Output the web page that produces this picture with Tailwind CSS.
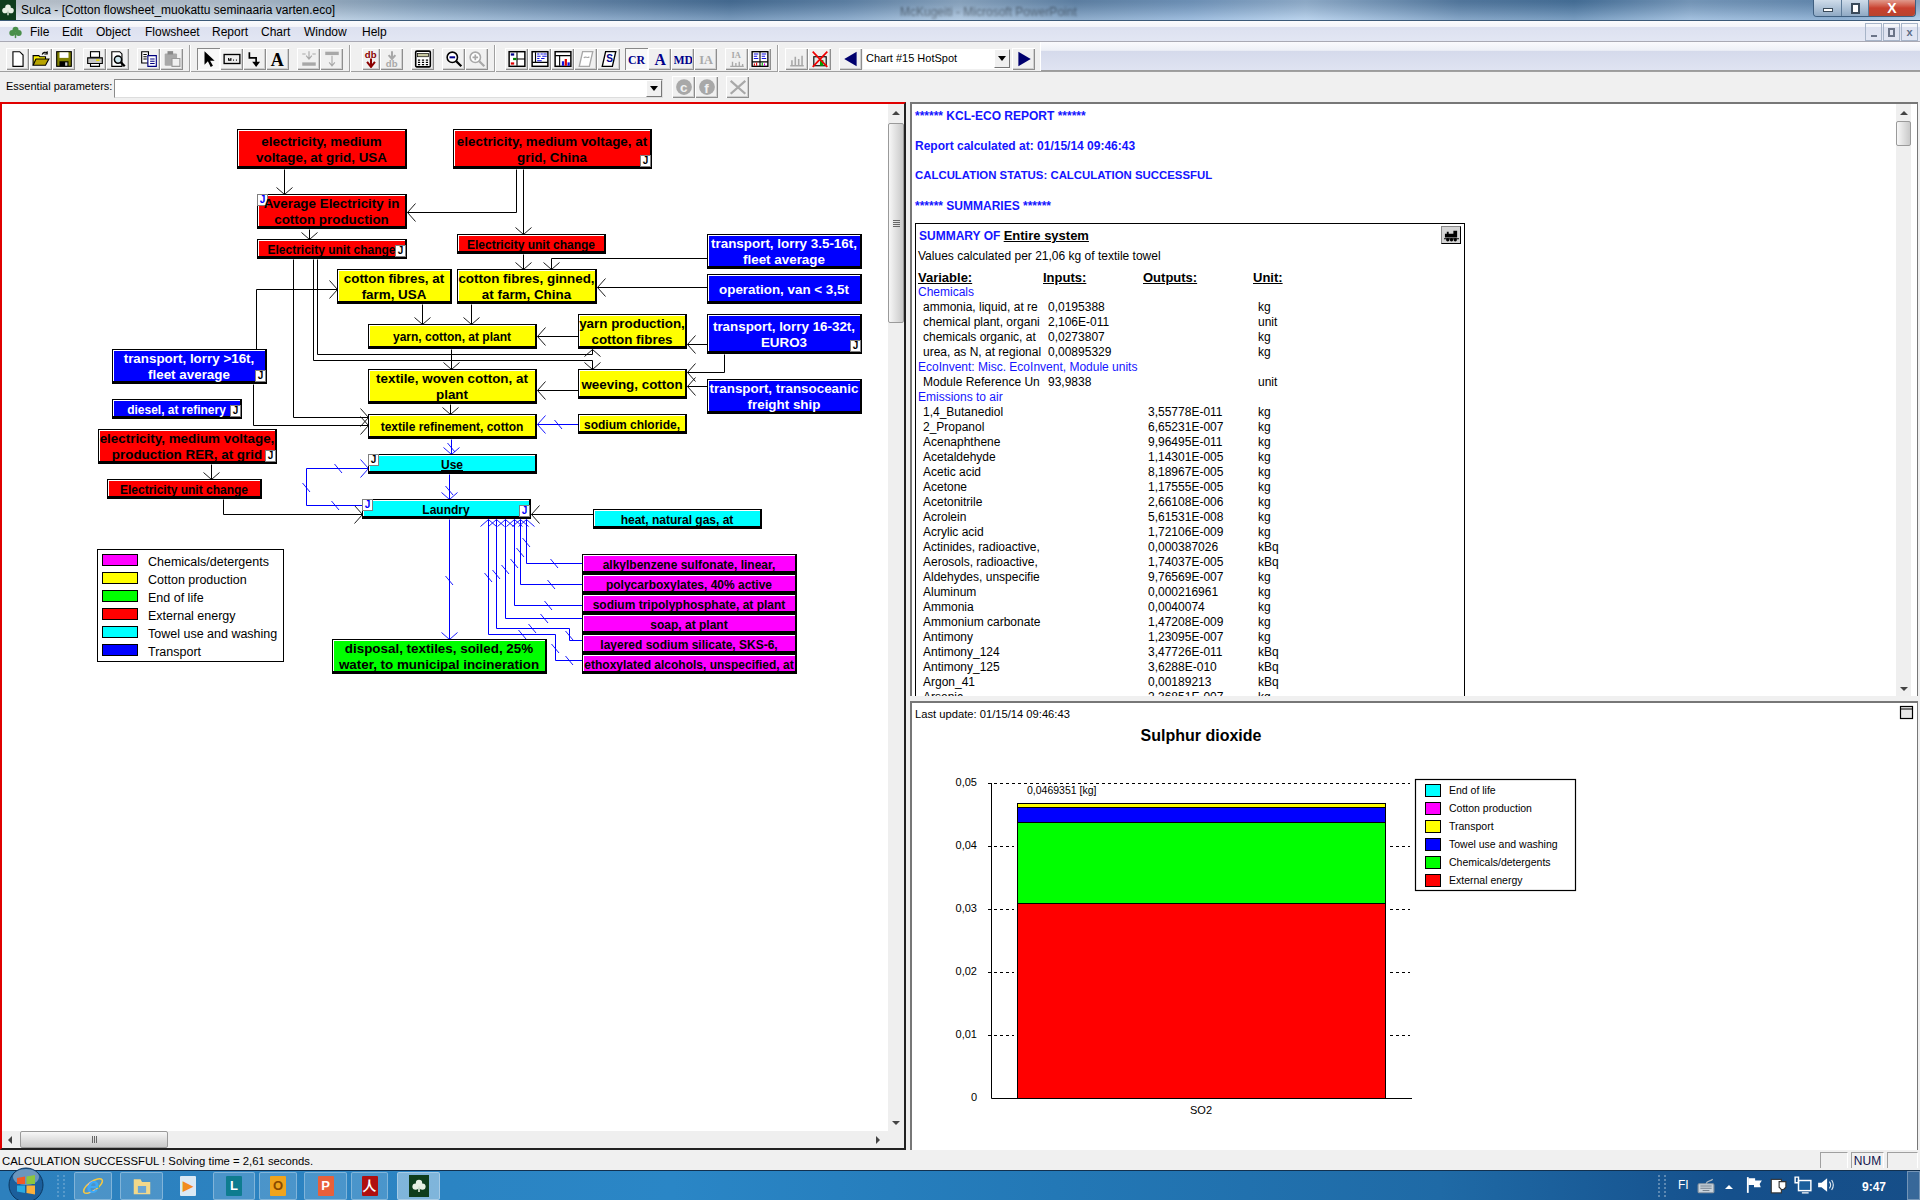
<!DOCTYPE html>
<html lang="en">
<head>
  <meta charset="UTF-8" />
  <title>Sulca</title>
  <script src="https://cdn.jsdelivr.net/npm/@tailwindcss/browser@4"></script>
</head>
<body class="w-[1920px] h-[1200px] overflow-hidden flex flex-col bg-[#f0f0f0] text-black font-['Liberation_Sans',Arial,sans-serif]">

  <!-- Title bar -->
  <header class="relative h-[21px] shrink-0 flex items-center overflow-hidden border-b border-[#3c5a78] bg-[linear-gradient(90deg,#d5dfea_0%,#c6d6e6_12%,#8fb0d0_22%,#6f95bd_30%,#4f7ba8_38%,#6a93bd_44%,#9dbcdb_50%,#6c94bd_56%,#7fa8d4_62%,#a5c6e8_68%,#5f8ab6_76%,#4f7fae_82%,#87aed6_88%,#6e9ac7_96%,#9cc0e4_100%)]">
    <div class="absolute inset-0 bg-gradient-to-b from-black/15 to-white/25"></div>
    <div class="relative w-[16px] h-[20px] bg-[#0e3d1c] flex items-center justify-center" id="titleIcon"></div>
    <span class="relative ml-[5px] text-[12px] text-black">Sulca - [Cotton flowsheet_muokattu seminaaria varten.eco]</span>
    <span class="absolute left-[900px] top-[3px] text-[12px] text-black/40 blur-[1px]">McKugeiti - Microsoft PowerPoint</span>
    <div class="absolute right-[4px] top-0 h-[17px] flex rounded-b-[4px] border border-t-0 border-[#3f5f80] overflow-hidden">
      <div class="w-[28px] bg-gradient-to-b from-[#cfdcea] to-[#8fa9c4] flex items-center justify-center border-r border-[#5c7a98]"><div class="w-[10px] h-[4px] bg-white border border-[#3a4a5a] mt-[4px]"></div></div>
      <div class="w-[27px] bg-gradient-to-b from-[#cfdcea] to-[#8fa9c4] flex items-center justify-center border-r border-[#5c7a98]"><div class="w-[9px] h-[11px] bg-white border-2 border-[#3a4a5a]"></div></div>
      <div class="w-[46px] bg-gradient-to-b from-[#e0998c] via-[#c9402f] to-[#b8442f] flex items-center justify-center text-white text-[14px] font-bold leading-none">X</div>
    </div>
  </header>

  <!-- Menu bar -->
  <nav class="relative h-[21px] shrink-0 flex items-center pt-[2px] text-[12px] border-b border-[#a9a9b4] bg-[linear-gradient(#fbfbfd_0%,#f3f4f9_30%,#dde1f0_32%,#e2e6f3_100%)]">
    <div class="w-[30px] flex justify-center" id="menuIcon"></div>
    <span class="w-[32px]">File</span>
    <span class="w-[34px]">Edit</span>
    <span class="w-[49px]">Object</span>
    <span class="w-[67px]">Flowsheet</span>
    <span class="w-[49px]">Report</span>
    <span class="w-[43px]">Chart</span>
    <span class="w-[58px]">Window</span>
    <span>Help</span>
    <div class="absolute right-[2px] top-[2px] flex gap-[1px] text-[#5d6b85]">
      <div class="w-[17px] h-[18px] border border-[#a7b4c8] flex items-end justify-center pb-[3px]"><div class="w-[6px] h-[2px] bg-[#6b7488]"></div></div>
      <div class="w-[17px] h-[18px] border border-[#a7b4c8] flex items-center justify-center"><div class="w-[7px] h-[9px] border-2 border-[#6b7488]"></div></div>
      <div class="w-[17px] h-[18px] border border-[#a7b4c8] flex items-center justify-center text-[11px] font-bold leading-none">x</div>
    </div>
  </nav>

  <!-- Toolbar -->
  <div class="h-[30px] shrink-0 flex border-b border-[#a0a0a0]">
    <div id="toolbar" class="w-[1041px] shrink-0 flex items-center pt-[4px] bg-[#f0f0f0] border-r border-[#fff]"></div>
    <div class="flex-1 border-b border-[#9c9c9c] bg-[linear-gradient(#fafafd_0%,#eef0f7_30%,#d5daeb_32%,#dfe3f2_100%)]"></div>
  </div>

  <!-- Essential parameters -->
  <div class="h-[30px] shrink-0 flex items-center bg-[#f0f0f0]">
    <span class="ml-[6px] w-[108px] text-[11px] pb-[2px] whitespace-nowrap">Essential parameters:</span>
    <div class="w-[549px] h-[19px] mt-[2px] bg-white border border-[#8a8a8a] border-b-[#ddd] border-r-[#ddd] flex justify-end items-stretch">
      <div class="w-[16px] bg-[#f0f0f0] border border-[#fff] border-r-[#777] border-b-[#777] flex items-center justify-center"><div class="w-0 h-0 border-x-[4px] border-x-transparent border-t-[5px] border-t-black"></div></div>
    </div>
    <div id="paramBtns" class="flex items-center ml-[9px]"></div>
  </div>

  <main class="h-[1048px] shrink-0 flex">
    <!-- Flowsheet -->
    <section class="w-[906px] shrink-0 flex flex-col border-l-2 border-t-2 border-t-[#e00000] border-l-[#e00000] border-r-2 border-r-[#222] border-b-2 border-b-[#222]">
      <div class="flex-1 flex min-h-0">
        <div class="relative flex-1 bg-white overflow-hidden">
          <div id="canvas" class="absolute left-[-2px] top-[-104px] w-[1000px] h-[1100px]"></div>
        </div>
        <div class="w-[16px] shrink-0 bg-[#efefef] flex flex-col items-center relative">
          <div class="mt-[7px] w-0 h-0 border-x-[4px] border-x-transparent border-b-[4px] border-b-[#444]"></div>
          <div class="absolute left-0 right-0 top-[19px] h-[200px] rounded-[2px] border border-[#9a9a9a] bg-gradient-to-r from-[#f7f7f7] to-[#c9c9c9] flex flex-col justify-center items-center gap-[1px]">
            <div class="w-[7px] h-px bg-[#666]"></div><div class="w-[7px] h-px bg-[#666]"></div><div class="w-[7px] h-px bg-[#666]"></div><div class="w-[7px] h-px bg-[#666]"></div>
          </div>
          <div class="absolute bottom-[6px] w-0 h-0 border-x-[4px] border-x-transparent border-t-[4px] border-t-[#444]"></div>
        </div>
      </div>
      <div class="relative h-[17px] shrink-0 bg-[#efefef] flex items-center">
        <div class="ml-[6px] w-0 h-0 border-y-[4px] border-y-transparent border-r-[4px] border-r-[#444]"></div>
        <div class="absolute left-[18px] top-0 bottom-0 w-[148px] rounded-[2px] border border-[#9a9a9a] bg-gradient-to-b from-[#f7f7f7] to-[#c9c9c9] flex justify-center items-center gap-[1px]">
          <div class="w-px h-[7px] bg-[#666]"></div><div class="w-px h-[7px] bg-[#666]"></div><div class="w-px h-[7px] bg-[#666]"></div>
        </div>
        <div class="absolute right-[24px] w-0 h-0 border-y-[4px] border-y-transparent border-l-[4px] border-l-[#444]"></div>
      </div>
    </section>

    <div class="w-[4px] shrink-0"></div>

    <!-- Report + chart -->
    <section class="flex-1 flex flex-col pr-[2px]">
      <div class="relative h-[594px] shrink-0 overflow-hidden bg-white border-l-2 border-t-2 border-[#777] border-r border-r-[#777]">
        <div class="pl-[3px] flex flex-col gap-[10px] pt-[2px] text-[12px] font-bold text-[#1414ff]">
          <div class="h-[20px] flex items-center">****** KCL-ECO REPORT ******</div>
          <div class="h-[20px] flex items-center">Report calculated at: 01/15/14 09:46:43</div>
          <div class="h-[20px] flex items-center text-[11.4px]">CALCULATION STATUS: CALCULATION SUCCESSFUL</div>
          <div class="h-[20px] flex items-center">****** SUMMARIES ******</div>
        </div>
        <div class="relative ml-[3px] mt-[7px] w-[550px] h-[600px] pt-[2px] border border-black text-[12px]">
          <div class="absolute right-[3px] top-[2px] w-[20px] h-[18px] bg-[#d4d4d4] border border-black border-t-[#888] border-l-[#888] flex items-center justify-center" id="trainBtn"></div>
          <div class="h-[20px] pl-[3px] flex items-center"><span class="font-bold text-[#1414ff]">SUMMARY OF&nbsp;</span><span class="font-bold underline text-[13px]">Entire system</span></div>
          <div class="h-[20px] pl-[2px] flex items-center">Values calculated per 21,06 kg of textile towel</div>
          <div class="h-[17px] mt-[2px] pl-[2px] grid grid-cols-[125px_100px_110px_100px] font-bold underline items-center text-[13px]">
            <span>Variable:</span><span>Inputs:</span><span>Outputs:</span><span>Unit:</span>
          </div>
          <div id="reportRows"></div>
        </div>
        <!-- report scrollbar -->
        <div class="absolute right-[6px] top-0 bottom-0 w-[15px] bg-[#efefef] flex flex-col items-center">
          <div class="mt-[7px] w-0 h-0 border-x-[4px] border-x-transparent border-b-[4px] border-b-[#444]"></div>
          <div class="absolute left-0 right-0 top-[17px] h-[25px] rounded-[2px] border border-[#9a9a9a] bg-gradient-to-r from-[#f7f7f7] to-[#c9c9c9]"></div>
          <div class="absolute bottom-[5px] w-0 h-0 border-x-[4px] border-x-transparent border-t-[4px] border-t-[#444]"></div>
        </div>
      </div>
      <div class="h-[5px] shrink-0"></div>
      <div class="relative flex-1 bg-white overflow-hidden border-l-2 border-t-2 border-[#777] border-r border-r-[#777]">
        <svg viewBox="912 703 1006 446" class="absolute left-0 top-0 w-[1006px] h-[446px]" id="chart"></svg>
      </div>
    </section>
  </main>

  <!-- Status bar -->
  <footer class="h-[20px] shrink-0 flex items-center text-[12px] bg-[#f0f0f0]">
    <span class="ml-[2px] flex-1 pt-[3px] text-[11.3px]">CALCULATION SUCCESSFUL ! Solving time = 2,61 seconds.</span>
    <div class="w-[28px] h-[16px] border border-[#a0a0a0] border-b-0 border-r-[#fff]"></div>
    <div class="ml-[3px] w-[33px] h-[16px] border border-[#a0a0a0] border-b-0 border-r-[#fff] text-[#10104a] text-[12px] leading-[16px] text-center">NUM</div>
    <div class="ml-[3px] mr-[2px] w-[31px] h-[16px] border border-[#a0a0a0] border-b-0 border-r-[#fff]"></div>
  </footer>

  <!-- Windows taskbar -->
  <div id="taskbar" class="relative h-[30px] shrink-0 flex items-center border-t border-[#12304e] bg-[linear-gradient(90deg,#2d80bd_0%,#2a86c6_35%,#2378b6_55%,#1f6aa6_75%,#15508c_90%,#164e88_100%)]"></div>

  <script>
    // --- little svg helpers ---
    const svg = (body, w = 18, h = 18) =>
      `<svg width="${w}" height="${h}" viewBox="0 0 16 16" class="block">${body}</svg>`;
    const clover = c => `<circle cx="8" cy="5" r="3.2" fill="${c}"/><circle cx="4.6" cy="8.6" r="3.2" fill="${c}"/><circle cx="11.4" cy="8.6" r="3.2" fill="${c}"/><path d="M7.2 8h1.6v6H7.2z" fill="${c}"/>`;

    document.getElementById("titleIcon").innerHTML = svg(clover("#e8f0e4"), 14, 14);
    document.getElementById("menuIcon").innerHTML = svg(clover("#4a8f4a"), 15, 15);
    document.getElementById("trainBtn").innerHTML = svg('<path d="M1 10V6h2V4h2v2h5V3h4v7zM0 11h16v1H0z" fill="#000"/><circle cx="4" cy="12.5" r="1.8" fill="#000"/><circle cx="8" cy="12.5" r="1.8" fill="#000"/><circle cx="12" cy="12.5" r="1.8" fill="#000"/>', 15, 15);

    const T = (t, x, y, size, fill, fam = "Liberation Serif") =>
      `<text x="${x}" y="${y}" font-size="${size}" font-weight="bold" font-family="${fam}" fill="${fill}">${t}</text>`;
    const gray = "#a8a8a8";
    const bars = c => `<path d="M2 14h12M3.5 14V9M6.5 14V6M9.5 14V8M12.5 14V5" stroke="${c}" stroke-width="1.4" fill="none"/>`;
    const frame = inner => `<rect x="1" y="1.5" width="14" height="13" fill="#fff" stroke="#000" stroke-width="1.3"/>${inner}`;
    const magnifier = (c, sign) => `<circle cx="6.5" cy="6.5" r="4.6" fill="#fff" stroke="${c}" stroke-width="1.4"/><path d="M10 10l4.5 4.5" stroke="${c}" stroke-width="2"/>${sign}`;

    const icons = {
      newDoc: '<path d="M3.5 1.5h6l3 3v10h-9z" fill="#fff" stroke="#000"/>',
      open: '<path d="M1 13.5V5h5l1 1h5v2" fill="#fff200" stroke="#000"/><path d="M1 13.5L3.5 8H15l-3 5.5z" fill="#b8a400" stroke="#000"/><path d="M9 4c1-2 3-2.5 4-1.5M13.5 1v2.5H11" fill="none" stroke="#000"/>',
      save: '<rect x="1.5" y="1.5" width="13" height="13" fill="#808000" stroke="#000"/><rect x="4" y="2" width="8" height="5" fill="#fff"/><rect x="4" y="10" width="8" height="4.5" fill="#000"/><rect x="9" y="11" width="2" height="3" fill="#ccc"/>',
      print: '<rect x="4" y="1.5" width="8" height="5" fill="#fff" stroke="#000"/><path d="M1.5 7h13v5h-13z" fill="#c8c8c8" stroke="#000"/><path d="M4 12h8v2.5H4z" fill="#fff" stroke="#000"/><path d="M9 9h3" stroke="#e8d800" stroke-width="1.5"/>',
      preview: '<path d="M2.5 1.5h7l2 2v11h-9z" fill="#fff" stroke="#000"/><circle cx="8" cy="8.5" r="3.2" fill="#cfe8f0" stroke="#000" stroke-width="1.3"/><path d="M10.5 11l3.5 3.5" stroke="#000" stroke-width="2"/>',
      copy: '<path d="M1.5 1.5h6v10h-6z" fill="#fff" stroke="#000"/><path d="M3 4h3M3 6h3M3 8h3" stroke="#000"/><path d="M7 5h7.5v9.5H7z" fill="#fff" stroke="#000080"/><path d="M9 8h4M9 10h4M9 12h4" stroke="#000080"/>',
      paste: `<rect x="1.5" y="3" width="11" height="11" rx="1" fill="${gray}"/><rect x="4" y="1" width="5" height="3" fill="#888"/><path d="M8 7.5h7v7H8z" fill="#f0f0f0" stroke="#999"/>`,
      pointer: '<path d="M4 1v12l3-3 2.5 5 2-1-2.5-4.5h4z" fill="#000"/>',
      label: '<rect x="1" y="4" width="14" height="8" fill="#eee" stroke="#000" stroke-width="1.2"/><path d="M5 7v2h2V7M9 9h.8M11.5 9h.8" stroke="#000" fill="none"/>',
      connector: '<path d="M3 2v5h6v5" fill="none" stroke="#000" stroke-width="1.5"/><path d="M5.5 10.5h7L9 15z" fill="#000"/>',
      letterA: T("A", 1.5, 14, 16, "#000"),
      stepIn: `<path d="M8 1v6M5.5 5L8 8l2.5-3M2 3.5h3M11 3.5h3" stroke="${gray}" fill="none"/><rect x="2" y="11" width="12" height="3" fill="${gray}"/>`,
      stepOut: `<rect x="2" y="1.5" width="12" height="3" fill="${gray}"/><path d="M8 5v8M5.5 11L8 14l2.5-3" stroke="${gray}" fill="none"/>`,
      dbDown: T("db", 2.5, 7, 8.5, "#8b0000", "Liberation Sans") + '<path d="M8 7.5v6M4.5 10.5L8 15l3.5-4.5" stroke="#8b0000" stroke-width="1.8" fill="none"/>',
      dbUp: `<path d="M8 1v6M5 4.5L8 8l3-3.5" stroke="${gray}" stroke-width="1.8" fill="none"/>` + T("db", 2.5, 15, 8.5, gray, "Liberation Sans"),
      calc: '<rect x="1.5" y="1" width="13" height="14" rx="1" fill="#fff" stroke="#000" stroke-width="1.4"/><rect x="3" y="3" width="10" height="3" fill="#c8c8a0" stroke="#000" stroke-width=".6"/><path d="M3.5 9h2M7 9h2M10.5 9h2M3.5 11h2M7 11h2M10.5 11h2M3.5 13h2M7 13h2M10.5 13h2" stroke="#000" stroke-width="1.2"/>',
      zoomOut: magnifier("#000", '<path d="M4 6.5h5" stroke="#00008b" stroke-width="1.8"/>'),
      zoomIn: magnifier(gray, `<path d="M4 6.5h5M6.5 4v5" stroke="${gray}" stroke-width="1.5"/>`),
      layoutFlow: frame('<path d="M8 2v12M8 8h7" stroke="#000"/><rect x="2.5" y="3" width="3" height="2" fill="#00008b"/><rect x="4.5" y="7" width="3" height="2" fill="#008000"/><rect x="2.5" y="11" width="3" height="2" fill="#e00000"/>'),
      layoutText: frame('<path d="M1 11h14M4 2v9" stroke="#000"/><path d="M5.5 3.5h2M8.5 3.5h2M11 3.5h3M5.5 5.5h3M10 5.5h4M5.5 7.5h2M9 7.5h3M5.5 9.5h4" stroke="#1010e0"/>'),
      layoutChart: frame('<path d="M1 5h14M5 5v9" stroke="#000"/><rect x="7" y="10" width="2" height="4" fill="#1010e0"/><rect x="9.5" y="8" width="2" height="6" fill="#e00000"/><rect x="12" y="11" width="2" height="3" fill="#1010e0"/>'),
      scriptOff: `<path d="M5 1.5h9l-3 13H2z" fill="#fff" stroke="${gray}" stroke-width="1.2"/><path d="M6 7c2-2 3 1 5-1" stroke="${gray}" fill="none"/>`,
      scriptOn: '<path d="M5 1.5h9l-3 13H2z" fill="#fff" stroke="#000" stroke-width="1.2"/>' + T("S", 5.5, 11, 9, "#00008b", "Liberation Sans"),
      cr: T("CR", 0, 12, 10.5, "#00008b"),
      a: T("A", 3, 13, 14, "#00008b"),
      md: T("MD", -0.5, 12, 10.5, "#00008b"),
      ia: T("IA", 2, 12, 11, gray),
      iaBars: T("IA", 3, 7, 7.5, gray) + '<path d="M2 14.5h12M4 14.5v-4M7 14.5v-3M10 14.5v-4M13 14.5v-2" stroke="#a8a8a8" stroke-width="1.2"/>',
      grid: '<rect x="1" y="1.5" width="14" height="13" fill="#fff" stroke="#000" stroke-width="1.2"/><path d="M8 1.5v13M1 10.5h14" stroke="#000"/><path d="M2.5 3.5h4M2.5 5.5h3M2.5 7.5h4M9.5 3.5h4M9.5 5.5h3M9.5 7.5h4" stroke="#1010e0"/><path d="M3 14v-2M5 14v-3" stroke="#e00000"/><path d="M10 14v-3" stroke="#00a000"/><path d="M12 14v-2" stroke="#e000e0"/>',
      barsOff: bars(gray),
      barsX: '<rect x="2.5" y="6" width="11" height="8" fill="#e8e8e8" stroke="#000"/><rect x="8" y="9" width="3" height="5" fill="#00a000"/><path d="M1.5 1.5L14.5 15M14.5 1.5L1.5 15" stroke="#f00000" stroke-width="1.5"/>',
      prev: '<path d="M13 1.5v13L2 8z" fill="#00006e"/>',
      next: '<path d="M3 1.5v13L14 8z" fill="#00006e"/>',
      copyright: `<circle cx="8" cy="8" r="7" fill="${gray}"/>` + T("c", 4.5, 12, 12, "#f0f0f0", "Liberation Sans"),
      info: `<circle cx="8" cy="8" r="7" fill="${gray}"/>` + T("f", 5.5, 13, 12, "#f0f0f0", "Liberation Sans"),
      cross: '<path d="M1.5 2.5L14.5 14M14.5 2.5L1.5 14" stroke="#a8a8a8" stroke-width="2"/>'
    };

    // Toolbar buttons
    function btn(name, pressed, narrow) {
      const face = pressed
        ? "bg-[#f8f8f8] shadow-[inset_1px_1px_0_#888,inset_-1px_-1px_0_#fff]"
        : "bg-[#f0f0f0] shadow-[inset_1px_1px_0_#fff,inset_-1px_-1px_0_#8e8e8e,inset_-2px_-2px_0_#cfcfcf]";
      const width = narrow ? "w-[18px]" : "w-[23px]";
      return `<div class="${width} h-[22px] shrink-0 flex items-center justify-center ${face}">${svg(icons[name])}</div>`;
    }
    const sep = '<div class="ml-[6px] w-[2px] h-[27px] border-l border-[#a0a0a0] border-r border-r-white"></div>';

    document.getElementById("toolbar").innerHTML =
      '<div class="flex ml-[6px]">' + ["newDoc", "open", "save"].map(n => btn(n)).join("") + "</div>" +
      '<div class="flex ml-[8px]">' + ["print", "preview"].map(n => btn(n)).join("") + "</div>" +
      '<div class="flex ml-[8px]">' + ["copy", "paste"].map(n => btn(n)).join("") + "</div>" +
      sep +
      '<div class="flex ml-[6px]">' + ["pointer", "label", "connector", "letterA"].map(n => btn(n, n === "pointer")).join("") + "</div>" +
      '<div class="flex ml-[8px]">' + ["stepIn", "stepOut"].map(n => btn(n)).join("") + "</div>" +
      sep +
      '<div class="flex ml-[11px]">' + btn("dbDown", false, true) + btn("dbUp") + "</div>" +
      '<div class="flex ml-[8px]">' + btn("calc") + "</div>" +
      '<div class="flex ml-[8px]">' + ["zoomOut", "zoomIn"].map(n => btn(n)).join("") + "</div>" +
      sep +
      '<div class="flex ml-[9px]">' + ["layoutFlow", "layoutText", "layoutChart", "scriptOff", "scriptOn"].map(n => btn(n)).join("") + "</div>" +
      '<div class="flex ml-[5px]">' + ["cr", "a", "md", "ia"].map(n => btn(n, n === "cr")).join("") + "</div>" +
      '<div class="flex ml-[8px]">' + ["iaBars", "grid"].map(n => btn(n)).join("") + "</div>" +
      sep +
      '<div class="flex ml-[6px]">' + ["barsOff", "barsX"].map(n => btn(n)).join("") + "</div>" +
      '<div class="flex ml-[8px]">' + btn("prev") + "</div>" +
      '<div class="w-[147px] h-[20px] ml-[1px] bg-white flex items-center justify-between text-[11px] pl-[3px] shrink-0"><span>Chart #15 HotSpot</span><div class="w-[16px] h-[19px] bg-[#f0f0f0] border border-white border-r-[#777] border-b-[#777] flex items-center justify-center"><div class="w-0 h-0 border-x-[4px] border-x-transparent border-t-[5px] border-t-black"></div></div></div>' +
      '<div class="flex ml-[2px]">' + btn("next") + "</div>";

    document.getElementById("paramBtns").innerHTML =
      btn("copyright") + btn("info") + '<div class="ml-[8px]">' + btn("cross") + "</div>";

    // Report table
    const rows = [
      ["c", "Chemicals"],
      ["ammonia, liquid, at re", "0,0195388", "", "kg"],
      ["chemical plant, organi", "2,106E-011", "", "unit"],
      ["chemicals organic, at", "0,0273807", "", "kg"],
      ["urea, as N, at regional", "0,00895329", "", "kg"],
      ["c", "EcoInvent: Misc. EcoInvent, Module units"],
      ["Module Reference Un", "93,9838", "", "unit"],
      ["c", "Emissions to air"],
      ["1,4_Butanediol", "", "3,55778E-011", "kg"],
      ["2_Propanol", "", "6,65231E-007", "kg"],
      ["Acenaphthene", "", "9,96495E-011", "kg"],
      ["Acetaldehyde", "", "1,14301E-005", "kg"],
      ["Acetic acid", "", "8,18967E-005", "kg"],
      ["Acetone", "", "1,17555E-005", "kg"],
      ["Acetonitrile", "", "2,66108E-006", "kg"],
      ["Acrolein", "", "5,61531E-008", "kg"],
      ["Acrylic acid", "", "1,72106E-009", "kg"],
      ["Actinides, radioactive,", "", "0,000387026", "kBq"],
      ["Aerosols, radioactive,", "", "1,74037E-005", "kBq"],
      ["Aldehydes, unspecifie", "", "9,76569E-007", "kg"],
      ["Aluminum", "", "0,000216961", "kg"],
      ["Ammonia", "", "0,0040074", "kg"],
      ["Ammonium carbonate", "", "1,47208E-009", "kg"],
      ["Antimony", "", "1,23095E-007", "kg"],
      ["Antimony_124", "", "3,47726E-011", "kBq"],
      ["Antimony_125", "", "3,6288E-010", "kBq"],
      ["Argon_41", "", "0,00189213", "kBq"],
      ["Arsenic", "", "2,36851E-007", "kg"]
    ];
    document.getElementById("reportRows").innerHTML = rows.map(r => r[0] === "c"
      ? `<div class="h-[15px] pl-[2px] leading-[15px] text-[#1414ff] whitespace-nowrap">${r[1]}</div>`
      : `<div class="h-[15px] leading-[15px] grid grid-cols-[127px_100px_110px_100px] whitespace-nowrap"><span class="pl-[7px] overflow-hidden">${r[0]}</span><span class="pl-[5px]">${r[1]}</span><span class="pl-[5px]">${r[2]}</span><span class="pl-[5px]">${r[3]}</span></div>`
    ).join("");

    // Flowsheet boxes: x, y, w, h, colour, text, text size, badges
    const RED = "bg-[#ff0000] text-black", YEL = "bg-[#ffff00] text-black", BLU = "bg-[#0000ff] text-white",
          CYA = "bg-[#00ffff] text-black", MAG = "bg-[#ff00ff] text-black", GRN = "bg-[#00ff00] text-black";
    const nodes = [
      [237, 129, 170, 40, RED, "electricity, medium<br>voltage, at grid, USA", 13.4],
      [453, 129, 199, 40, RED, "electricity, medium voltage, at<br>grid, China", 13.4, "br"],
      [257, 194, 150, 35, RED, "Average Electricity in<br>cotton production", 13.4, "tlb"],
      [257, 239, 150, 20, RED, "Electricity unit change", 12, "br"],
      [457, 234, 149, 20, RED, "Electricity unit change", 12],
      [707, 234, 155, 35, BLU, "transport, lorry 3.5-16t,<br>fleet average", 13.4],
      [707, 274, 155, 30, BLU, "operation, van &lt; 3,5t", 13.4],
      [337, 269, 115, 35, YEL, "cotton fibres, at<br>farm, USA", 13.4],
      [457, 269, 140, 35, YEL, "cotton fibres, ginned,<br>at farm, China", 13.4],
      [368, 324, 169, 25, YEL, "yarn, cotton, at plant", 12],
      [578, 314, 109, 35, YEL, "yarn production,<br>cotton fibres", 13.4],
      [707, 314, 155, 40, BLU, "transport, lorry 16-32t,<br>EURO3", 13.4, "br"],
      [368, 369, 169, 35, YEL, "textile, woven cotton, at<br>plant", 13.4],
      [578, 369, 109, 30, YEL, "weeving, cotton", 13.4],
      [707, 379, 155, 35, BLU, "transport, transoceanic<br>freight ship", 13.4],
      [112, 349, 155, 35, BLU, "transport, lorry &gt;16t,<br>fleet average", 13.4, "br"],
      [112, 399, 130, 20, BLU, "diesel, at refinery", 12, "br"],
      [368, 414, 169, 25, YEL, "textile refinement, cotton", 12],
      [578, 414, 109, 20, YEL, "sodium chloride,", 12],
      [98, 429, 179, 35, RED, "electricity, medium voltage,<br>production RER, at grid", 13.4, "br"],
      [368, 454, 169, 20, CYA, "<u>Use</u>", 12, "tl"],
      [107, 479, 155, 20, RED, "Electricity unit change", 12],
      [362, 499, 169, 20, CYA, "Laundry", 12, "tlb brb"],
      [593, 509, 169, 20, CYA, "heat, natural gas, at", 12],
      [582, 554, 215, 20, MAG, "alkylbenzene sulfonate, linear,", 12],
      [582, 574, 215, 20, MAG, "polycarboxylates, 40% active", 12],
      [582, 594, 215, 20, MAG, "sodium tripolyphosphate, at plant", 12],
      [582, 614, 215, 20, MAG, "soap, at plant", 12],
      [582, 634, 215, 20, MAG, "layered sodium silicate, SKS-6,", 12],
      [582, 654, 215, 20, MAG, "ethoxylated alcohols, unspecified, at", 12],
      [332, 639, 215, 35, GRN, "disposal, textiles, soiled, 25%<br>water, to municipal incineration", 13.4]
    ];

    function badge(kind) {
      const pos = kind.startsWith("tl") ? "left-[-1px] top-[-1px]" : "right-[-1px] bottom-[-1px]";
      const col = kind.endsWith("b") ? "text-[#0000ff]" : "text-black";
      return `<div class="absolute ${pos} w-[11px] h-[12px] bg-white border border-[#808080] text-[10px] leading-[10px] font-bold text-center ${col}">J</div>`;
    }
    const nodeHtml = nodes.map(([x, y, w, h, col, text, size, badges]) =>
      `<div class="absolute flex items-center justify-center text-center font-bold leading-[16px] whitespace-nowrap pt-[3px] border border-black border-r-2 border-b-[3px] shadow-[inset_1px_1px_0_#fff] ${col}"
            style="left:${x}px;top:${y}px;width:${w}px;height:${h}px;font-size:${size}px">${(badges || "").split(" ").filter(Boolean).map(badge).join("")}<span class="relative">${text}</span></div>`
    ).join("");

    // Connectors: colour, points (the arrow sits on the last point)
    const B = "#000", L = "#0000ff";
    const conns = [
      [B, "284,169 284,194"], [B, "516,169 516,212 407,212"], [B, "523,169 523,234"], [B, "309,229 309,239"],
      [B, "523,254 523,269"], [B, "707,258 551,258 551,269"], [B, "707,287 597,287"], [B, "256,349 256,289 337,289"],
      [B, "293,259 293,417 368,417"], [B, "313,259 313,360 592,360 592,369"], [B, "317,259 317,354 592,354 592,349"],
      [B, "422,304 422,324"], [B, "471,304 471,324"], [B, "578,336 537,336"], [B, "707,344 687,344"],
      [B, "724,354 724,372 687,372"], [B, "707,386 687,386"], [B, "578,390 537,390"], [B, "451,349 451,369"],
      [B, "450,404 450,414"], [B, "253,384 253,425 368,425"], [B, "211,464 211,479"], [B, "223,499 223,514 362,514"],
      [B, "593,514 531,514"],
      [L, "578,424 537,424"], [L, "451,439 451,454"], [L, "449,474 449,499"], [L, "362,505 306,505 306,468 368,468"],
      [L, "449,519 449,639"], [L, "582,563 526,563 526,519"], [L, "582,584 520,584 520,519"], [L, "582,605 514,605 514,519"],
      [L, "582,618 505,618 505,519"], [L, "582,640 569,640 569,628 496,628 496,519"], [L, "582,660 555,660 555,634 488,634 488,519"]
    ];
    const ticks = [[554,563],[526,542],[551,584],[520,552],[548,605],[514,563],[544,618],[505,569],[569,635],[532,628],[496,574],
      [569,660],[555,648],[522,634],[488,577],[449,580],[449,490],[451,447],[338,468],[306,487],[335,505],[558,424]];

    let lines = "";
    conns.forEach(([c, pts]) => {
      const p = pts.split(" ").map(s => s.split(",").map(Number));
      const q = p.map(([x, y]) => `${x + .5},${y + .5}`).join(" ");
      lines += `<polyline points="${q}" fill="none" stroke="${c}"/>`;
      const [x1, y1] = p[p.length - 2], [x2, y2] = p[p.length - 1];
      const dx = Math.sign(x2 - x1), dy = Math.sign(y2 - y1);
      const ax = x2 + .5, ay = y2 + .5;
      const d = dy ? `M${ax - 8} ${ay - dy * 7}L${ax} ${ay}L${ax + 8} ${ay - dy * 7}`
                   : `M${ax - dx * 8} ${ay - 9}L${ax} ${ay}L${ax - dx * 8} ${ay + 9}`;
      lines += `<path d="${d}" fill="none" stroke="${c}" stroke-width=".9"/>`;
    });
    ticks.forEach(([x, y]) => lines += `<path d="M${x - 3.5} ${y - 4}L${x + 4} ${y + 5}" stroke="#0000ff" stroke-width=".9"/>`);

    const legendItems = [["bg-[#ff00ff]", "Chemicals/detergents"], ["bg-[#ffff00]", "Cotton production"], ["bg-[#00ff00]", "End of life"],
      ["bg-[#ff0000]", "External energy"], ["bg-[#00ffff]", "Towel use and washing"], ["bg-[#0000ff]", "Transport"]];
    const legend = `<div class="absolute left-[97px] top-[549px] w-[187px] h-[113px] border border-black bg-white pl-[4px] pt-[4px] text-[12.5px]">` +
      legendItems.map(([c, t]) => `<div class="h-[18px] flex items-start"><div class="w-[36px] h-[12px] border border-black ${c}"></div><span class="ml-[10px] leading-[16px]">${t}</span></div>`).join("") + "</div>";

    document.getElementById("canvas").innerHTML =
      `<svg class="absolute left-0 top-0" width="1000" height="1100">${lines}</svg>` + nodeHtml + legend;

    // Sulphur dioxide chart
    let ch = "";
    const txt = (t, x, y, anchor = "start", size = 11, extra = "") =>
      `<text x="${x}" y="${y}" font-size="${size}" text-anchor="${anchor}" fill="#000" font-family="Liberation Sans" ${extra}>${t}</text>`;
    ch += txt("Last update: 01/15/14 09:46:43", 915, 718, "start", 11.2);
    ch += txt("Sulphur dioxide", 1201, 741, "middle", 16, 'font-weight="bold"');
    [["0,05", 783], ["0,04", 846], ["0,03", 909], ["0,02", 972], ["0,01", 1035], ["0", 1098]].forEach(([l, y], i) => {
      ch += txt(l, 977, y + 3, "end", 11);
      if (i === 0) ch += `<path d="M988 783.5H1410" stroke="#000" stroke-dasharray="3 3"/>`;
      else if (i < 5) ch += `<path d="M988 ${y + .5}H1014M1390 ${y + .5}H1410" stroke="#000" stroke-dasharray="3 3"/>`;
    });
    ch += '<path d="M991.5 783V1098.5H1412" fill="none" stroke="#000"/>';
    ch += txt("0,0469351 [kg]", 1027, 794, "start", 10.5);
    [[803, 4, "#ffff00"], [807, 15, "#0000ff"], [822, 81, "#00ff00"], [903, 195, "#ff0000"]].forEach(([y, h, c]) => {
      ch += `<rect x="1017.5" y="${y + .5}" width="368" height="${h}" fill="${c}" stroke="#000"/>`;
    });
    ch += txt("SO2", 1201, 1114, "middle", 11);
    ch += '<rect x="1415.5" y="779.5" width="160" height="111" fill="#fff" stroke="#000" stroke-width="1.2"/>';
    [["#00ffff", "End of life"], ["#ff00ff", "Cotton production"], ["#ffff00", "Transport"], ["#0000ff", "Towel use and washing"], ["#00ff00", "Chemicals/detergents"], ["#ff0000", "External energy"]].forEach(([c, t], i) => {
      const y = 784 + i * 18;
      ch += `<rect x="1425.5" y="${y + .5}" width="15" height="12" fill="${c}" stroke="#000"/>`;
      ch += txt(t, 1449, y + 10, "start", 10.5);
    });
    ch += '<rect x="1900.5" y="706.5" width="12" height="12" fill="#e8e8e8" stroke="#000" stroke-width="1.2"/><path d="M1901 709h11" stroke="#000"/>';
    document.getElementById("chart").innerHTML = ch;

    // Taskbar
    const tbBtn = (w, ml, body, active) =>
      `<div class="h-[28px] shrink-0 flex items-center justify-center rounded-[2px] border border-white/30 ${active ? "bg-white/40" : "bg-white/15"}" style="width:${w}px;margin-left:${ml}px">${body}</div>`;
    const win = `<svg width="36" height="36" viewBox="0 0 36 36" class="block"><circle cx="18" cy="18" r="17" fill="#1b5f9c" stroke="#0c3760"/><ellipse cx="18" cy="10" rx="13" ry="8" fill="#ffffff" fill-opacity=".35"/><path d="M9 11l8-1.5v7.5H9z" fill="#f05a28"/><path d="M18.5 9.5l8.5-1.5v9h-8.5z" fill="#8cc63f"/><path d="M9 18.5h8v7.5l-8-1.5z" fill="#29abe2"/><path d="M18.5 18.5H27v9l-8.5-1.5z" fill="#fbb03b"/></svg>`;
    const tile = (bg, letter, fg = "#fff") => `<div class="w-[16px] h-[20px] ${bg} rounded-[1px] flex items-center justify-center text-[13px] font-bold" style="color:${fg}">${letter}</div>`;
    const ieIcon = `<svg width="24" height="24" viewBox="0 0 24 24"><ellipse cx="12" cy="12" rx="11" ry="4.5" transform="rotate(-35 12 12)" fill="none" stroke="#f5c842" stroke-width="1.5"/></svg>`;
    document.getElementById("taskbar").innerHTML =
      `<div class="absolute left-[8px] top-[-4px]">${win}</div>` +
      '<div class="ml-[57px] w-[8px] h-[22px] border-x-2 border-dotted border-white/20"></div>' +
      tbBtn(38, 9, `<div class="relative w-[24px] h-[24px] flex items-center justify-center"><div class="absolute">${ieIcon}</div><span class="relative text-[22px] italic font-bold text-[#3fa9f5] leading-none">e</span></div>`) +
      tbBtn(43, 8, `<svg width="22" height="22" viewBox="0 0 16 16"><path d="M2 3h5l1 2h6v9H2z" fill="#f2d88a"/><rect x="5" y="8" width="6" height="5" fill="#6aa6d6"/></svg>`) +
      `<div class="ml-[4px] w-[41px] flex justify-center">${tile("bg-[#dbe9f4]", "▶", "#f28c1e")}</div>` +
      tbBtn(42, 5, tile("bg-[#0e7c8f]", "L")) +
      tbBtn(38, 4, tile("bg-[#f0a41c]", "O", "#8a4a00")) +
      tbBtn(43, 7, tile("bg-[#e8603a]", "P")) +
      tbBtn(37, 4, tile("bg-[#b01010]", "人")) +
      tbBtn(43, 9, `<div class="w-[20px] h-[22px] bg-[#0e3d1c] flex items-center justify-center">${svg(clover("#e8f0e4"), 16, 16)}</div>`, true) +
      '<div class="absolute left-[1658px] top-[4px] w-[8px] h-[22px] border-x-2 border-dotted border-white/30"></div>' +
      '<span class="absolute left-[1678px] top-[5px] text-white text-[12px]">FI</span>' +
      `<div class="absolute left-[1697px] top-[6px]">${svg('<rect x="1" y="6" width="14" height="8" rx="1" fill="#c9d3dc" stroke="#8a97a3"/><path d="M3 8h10M3 10h10M5 12h6" stroke="#77838f"/><path d="M8 6C9 3 12 4 14 2" stroke="#aab6c0" fill="none"/>')}</div>` +
      '<div class="absolute left-[1725px] top-[14px] w-0 h-0 border-x-[4px] border-x-transparent border-b-[4px] border-b-white"></div>' +
      `<div class="absolute left-[1745px] top-[5px]">${svg('<path d="M2.5 1v14" stroke="#fff" stroke-width="1.6"/><path d="M3 2h6v2h6l-2 3 1 3H8V8H3z" fill="#fff"/>')}</div>` +
      `<div class="absolute left-[1769px] top-[5px]">${svg('<rect x="2" y="3" width="9" height="12" fill="#fff" stroke="#333"/><path d="M9 5h6v5l-2 2h-2l-2-2z" fill="#fff" stroke="#333"/>')}</div>` +
      `<div class="absolute left-[1794px] top-[5px]">${svg('<rect x="4" y="4" width="11" height="9" fill="#1b5f9c" stroke="#fff" stroke-width="1.3"/><path d="M1 1h3v5H1zM7 15h6" stroke="#fff" stroke-width="1.3" fill="none"/>')}</div>` +
      `<div class="absolute left-[1817px] top-[5px]">${svg('<path d="M1 6h3l5-4v12l-5-4H1z" fill="#fff"/><path d="M11 5c1.5 2 1.5 4 0 6M13 3.5c2 3 2 6 0 9" stroke="#dfe8f0" fill="none"/>')}</div>` +
      '<span class="absolute left-[1862px] top-[7px] text-white text-[12px] font-bold">9:47</span>' +
      '<div class="absolute right-0 top-0 bottom-0 w-[13px] border border-white/30 bg-white/15"></div>';
  </script>
</body>
</html>
